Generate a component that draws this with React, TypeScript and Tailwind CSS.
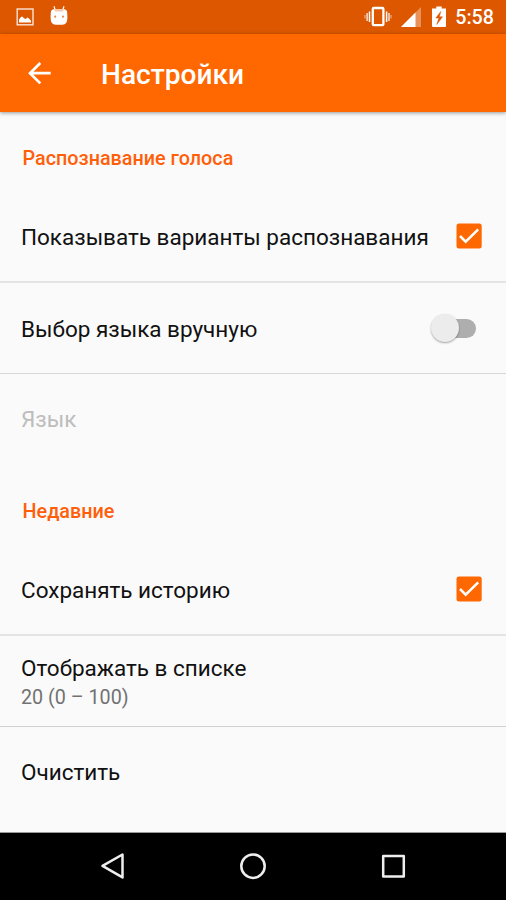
import type { ReactNode } from "react";

function StatusBar() {
  return (
    <div className="flex h-[34px] shrink-0 items-center bg-[#dc5700] pl-4 pr-3 text-white">
      <svg width="18" height="34" viewBox="0 0 18 34" fill="none">
        <rect x="1.2" y="9" width="15.8" height="15.8" stroke="#fbe3d5" strokeWidth="1.4" />
        <path d="M3 22.5v-3l2-2.5 1.2-.6 1.8 1.8 1.5.8 2-1.4 1.5.8 2 2.3v1.8z" fill="#fff" />
      </svg>
      <svg className="ml-4" width="18" height="34" viewBox="0 0 18 34" fill="none">
        <path d="M5.4 10.5 4 6.2M12.6 10.5 14 6.2" stroke="#fff" strokeWidth="1.2" />
        <path d="M.8 12.5Q1 9 5 9h8q4 0 4.2 3.5l.2 5q0 7.3-5 7.3H5.6q-5 0-5-7.3z" fill="#fff" />
        <path d="M4 9h10l-1.2 2.5H5.2z" fill="#f7c9aa" />
        <circle cx="5.2" cy="16.7" r="1.1" fill="#e58a50" />
        <circle cx="13" cy="16.7" r="1.1" fill="#e58a50" />
      </svg>
      <svg className="ml-auto" width="28" height="34" viewBox="0 0 28 34" fill="none" stroke="#fff">
        <rect x="8.8" y="8" width="10.6" height="17.2" rx="1" strokeWidth="2.3" />
        <path d="M5.5 11.5v10.5M22.6 11.5v10.5" strokeWidth="1.5" />
        <path d="M3.1 13v8M25 13v8" strokeWidth="1.2" />
        <path d="M1 15v3.5M27 15v3.5" strokeWidth="1" opacity=".6" />
      </svg>
      <svg className="ml-[9px]" width="21" height="34" viewBox="0 0 21 34">
        <path d="M0 27 20 7v20z" fill="#fff" opacity=".35" />
        <path d="M0 27 14.5 12.500v14.500z" fill="#fff" />
      </svg>
      <svg className="ml-[10px]" width="14" height="34" viewBox="0 0 14 34">
        <path d="M4.3 6.5h5.4v2H14V26q0 1-1 1H1q-1 0-1-1V8.5h4.3z" fill="#fff" />
        <path d="M8.800 11.500 3.800 18h3.100l-2.100 6.500 5.700-7.700H7.300z" fill="#dc5700" stroke="#dc5700" strokeWidth=".5" />
      </svg>
      <span className="ml-[9px] pt-[2px] text-[19.7px] font-medium leading-8">5:58</span>
    </div>
  );
}

function Toolbar() {
  return (
    <header className="z-10 flex h-[78px] shrink-0 items-center bg-[#ff6700] pl-[28px] text-white shadow-[0_1px_4px_rgba(0,0,0,0.4)]">
      <svg width="23" height="24" viewBox="0 0 23 24" fill="none" stroke="#fff" strokeWidth="2.7">
        <path d="M22.7 12.200H2.500M12.300 2 2 12.200l10.300 10.200" />
      </svg>
      <h1 className="ml-[50px] pt-[4px] text-[28.1px] font-medium leading-[34px]">Настройки</h1>
    </header>
  );
}

function Category({ children }: { children: ReactNode }) {
  return (
    <h2 className="flex h-[79px] shrink-0 items-center pl-[22.5px] pt-[15px] text-[19.8px] font-medium leading-6 text-[#ff5f0a]">
      {children}
    </h2>
  );
}

interface RowProps {
  title: string;
  summary?: string;
  disabled?: boolean;
  className?: string;
  control?: ReactNode;
}

function Row({ title, summary, disabled, className = "h-[91px] pb-[2px]", control }: RowProps) {
  return (
    <div className={`flex shrink-0 items-center justify-between pl-[21px] pr-6 ${className}`}>
      <div className={`whitespace-nowrap ${control ? "pt-px" : ""}`}>
        <div className={`text-[22.5px] leading-[28px] tracking-[-0.01px] ${disabled ? "text-[#bdbdbd]" : "text-[#111]"}`}>
          {title}
        </div>
        {summary && <div className="pt-[3px] text-[19.7px] leading-[26px] text-[#727272]">{summary}</div>}
      </div>
      {control}
    </div>
  );
}

function Checkbox() {
  return (
    <svg width="26" height="26" viewBox="0 0 26 26" fill="none">
      <rect x=".5" y=".4" width="25.2" height="25.2" rx="2.5" fill="#ff6700" />
      <path d="m4 13 5.7 5.7L22.2 6.3" stroke="#fff" strokeWidth="2.5" />
    </svg>
  );
}

function Toggle() {
  return (
    <div className="mr-[6px] flex h-[19px] w-[40px] items-center rounded-full bg-[#aeaeae]">
      <div className="-ml-[5px] size-[28px] rounded-full bg-[#ececec] shadow-[0_1px_2px_rgba(0,0,0,0.35)]" />
    </div>
  );
}

function NavBar() {
  return (
    <nav className="flex h-[67px] shrink-0 items-center justify-between bg-black px-[99px]">
      <svg width="28" height="28" viewBox="0 0 28 28" fill="none" stroke="#eee" strokeWidth="2.5" strokeLinejoin="round">
        <path d="M23.5 1.500v22.900L3.500 12.900z" />
      </svg>
      <svg width="28" height="28" viewBox="0 0 28 28" fill="none" stroke="#eee" strokeWidth="2.5">
        <circle cx="14" cy="13.200" r="11.700" />
      </svg>
      <svg width="28" height="28" viewBox="0 0 28 28" fill="none" stroke="#eee" strokeWidth="2.5" strokeLinejoin="round">
        <rect x="4.200" y="2.900" width="20.600" height="20.600" />
      </svg>
    </nav>
  );
}

export default function App() {
  return (
    <div className="flex h-[900px] w-[506px] flex-col overflow-hidden bg-[#fafafa] font-[Roboto,sans-serif]">
      <StatusBar />
      <Toolbar />
      <main className="flex min-h-0 flex-1 flex-col overflow-hidden border-b border-[#999]">
        <Category>Распознавание голоса</Category>
        <Row title="Показывать варианты распознавания" className="h-[92px] border-b-2 border-[#e4e4e4]" control={<Checkbox />} />
        <Row title="Выбор языка вручную" className="h-[91px] border-b border-[#d6d6d6]" control={<Toggle />} />
        <Row title="Язык" disabled />
        <Category>Недавние</Category>
        <Row title="Сохранять историю" className="h-[92px] border-b-2 border-[#e4e4e4]" control={<Checkbox />} />
        <Row title="Отображать в списке" summary="20 (0 – 100)" className="h-[91px] border-b border-[#d0d0d0] pt-[3px]" />
        <Row title="Очистить" />
      </main>
      <NavBar />
    </div>
  );
}
